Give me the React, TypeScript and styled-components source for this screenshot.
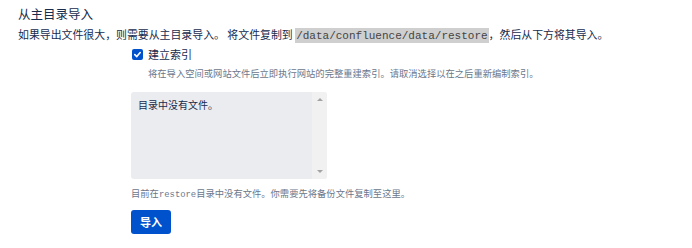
import React from "react";
import styled, { createGlobalStyle } from "styled-components";

const Global = createGlobalStyle`
  html, body { margin: 0; padding: 0; background: #ffffff; }
  body { font-family: "Noto Sans CJK SC", "Noto Sans", sans-serif; color: #172b4d; }
`;

const Page = styled.div`
  padding: 6px 18px 0 18px;
`;

const Title = styled.h3`
  margin: 0;
  font-size: 12.5px;
  line-height: 16px;
  font-weight: 400;
  color: #172b4d;
`;

const Para = styled.p`
  margin: 2px 0 0 0;
  font-size: 10.9px;
  line-height: 20px;
  color: #172b4d;
`;

const Code = styled.code`
  font-family: "Liberation Mono", "Courier New", monospace;
  font-size: 11px;
  color: #444;
  background: #cfcfcf;
  padding: 2px 1px 1px 1px;
`;

const Form = styled.div`
  margin-left: 113px;
  display: flex;
  flex-direction: column;
  align-items: flex-start;
`;

const CheckRow = styled.label`
  display: flex;
  align-items: center;
  gap: 5px;
  height: 16px;
  padding-left: 1px;
  font-size: 11px;
  color: #172b4d;
`;

const Box = styled.span`
  width: 11px;
  height: 11px;
  border-radius: 2px;
  background: #0052cc;
  display: inline-flex;
  align-items: center;
  justify-content: center;
`;

const Desc = styled.div<{ $indent?: number }>`
  margin-top: 4px;
  padding-left: ${(p) => p.$indent ?? 0}px;
  font-size: 9.3px;
  line-height: 14px;
  color: #6b778c;
`;

const Area = styled.div`
  margin-top: 12px;
  width: 196px;
  height: 87px;
  border-radius: 3px;
  background: #ebecf0;
  display: flex;
  overflow: hidden;
`;

const AreaText = styled.div`
  flex: 1;
  padding: 5px 7px;
  font-size: 10px;
  line-height: 16px;
  color: #172b4d;
`;

const ScrollBar = styled.div`
  width: 15px;
  background: #f1f1f1;
  display: flex;
  flex-direction: column;
  justify-content: space-between;
  align-items: center;
  padding: 6px 0;
  box-sizing: border-box;
`;

const Arrow = styled.span<{ $down?: boolean }>`
  width: 0;
  height: 0;
  border-left: 3px solid transparent;
  border-right: 3px solid transparent;
  ${(p) =>
    p.$down
      ? "border-top: 3px solid #a3a3a3;"
      : "border-bottom: 3px solid #a3a3a3;"}
`;

const Foot = styled.div`
  margin-top: 7px;
  font-size: 9.3px;
  line-height: 14px;
  color: #6b778c;
`;

const FootCode = styled.code`
  font-family: "Liberation Mono", "Courier New", monospace;
  font-size: 8.9px;
  color: #6b778c;
`;

const Button = styled.button`
  margin-top: 8px;
  width: 40px;
  height: 24px;
  border: none;
  border-radius: 3px;
  background: #0052cc;
  color: #ffffff;
  font-family: "Noto Sans CJK SC", sans-serif;
  font-weight: 700;
  font-size: 11px;
  padding: 0;
  cursor: pointer;
`;

export default function App() {
  return (
    <>
      <Global />
      <Page>
        <Title>从主目录导入</Title>
        <Para>
          如果导出文件很大，则需要从主目录导入。 将文件复制到 <Code>/data/confluence/data/restore</Code>，然后从下方将其导入。
        </Para>
        <Form>
          <CheckRow>
            <Box>
              <svg width="9" height="9" viewBox="0 0 10 10">
                <path d="M2 5.2 L4.2 7.3 L8 2.8" stroke="#fff" strokeWidth="1.8" fill="none" strokeLinecap="round" strokeLinejoin="round" />
              </svg>
            </Box>
            建立索引
          </CheckRow>
          <Desc $indent={17}>将在导入空间或网站文件后立即执行网站的完整重建索引。请取消选择以在之后重新编制索引。</Desc>
          <Area>
            <AreaText>目录中没有文件。</AreaText>
            <ScrollBar>
              <Arrow />
              <Arrow $down />
            </ScrollBar>
          </Area>
          <Foot>
            目前在<FootCode>restore</FootCode>目录中没有文件。你需要先将备份文件复制至这里。
          </Foot>
          <Button>导入</Button>
        </Form>
      </Page>
    </>
  );
}
